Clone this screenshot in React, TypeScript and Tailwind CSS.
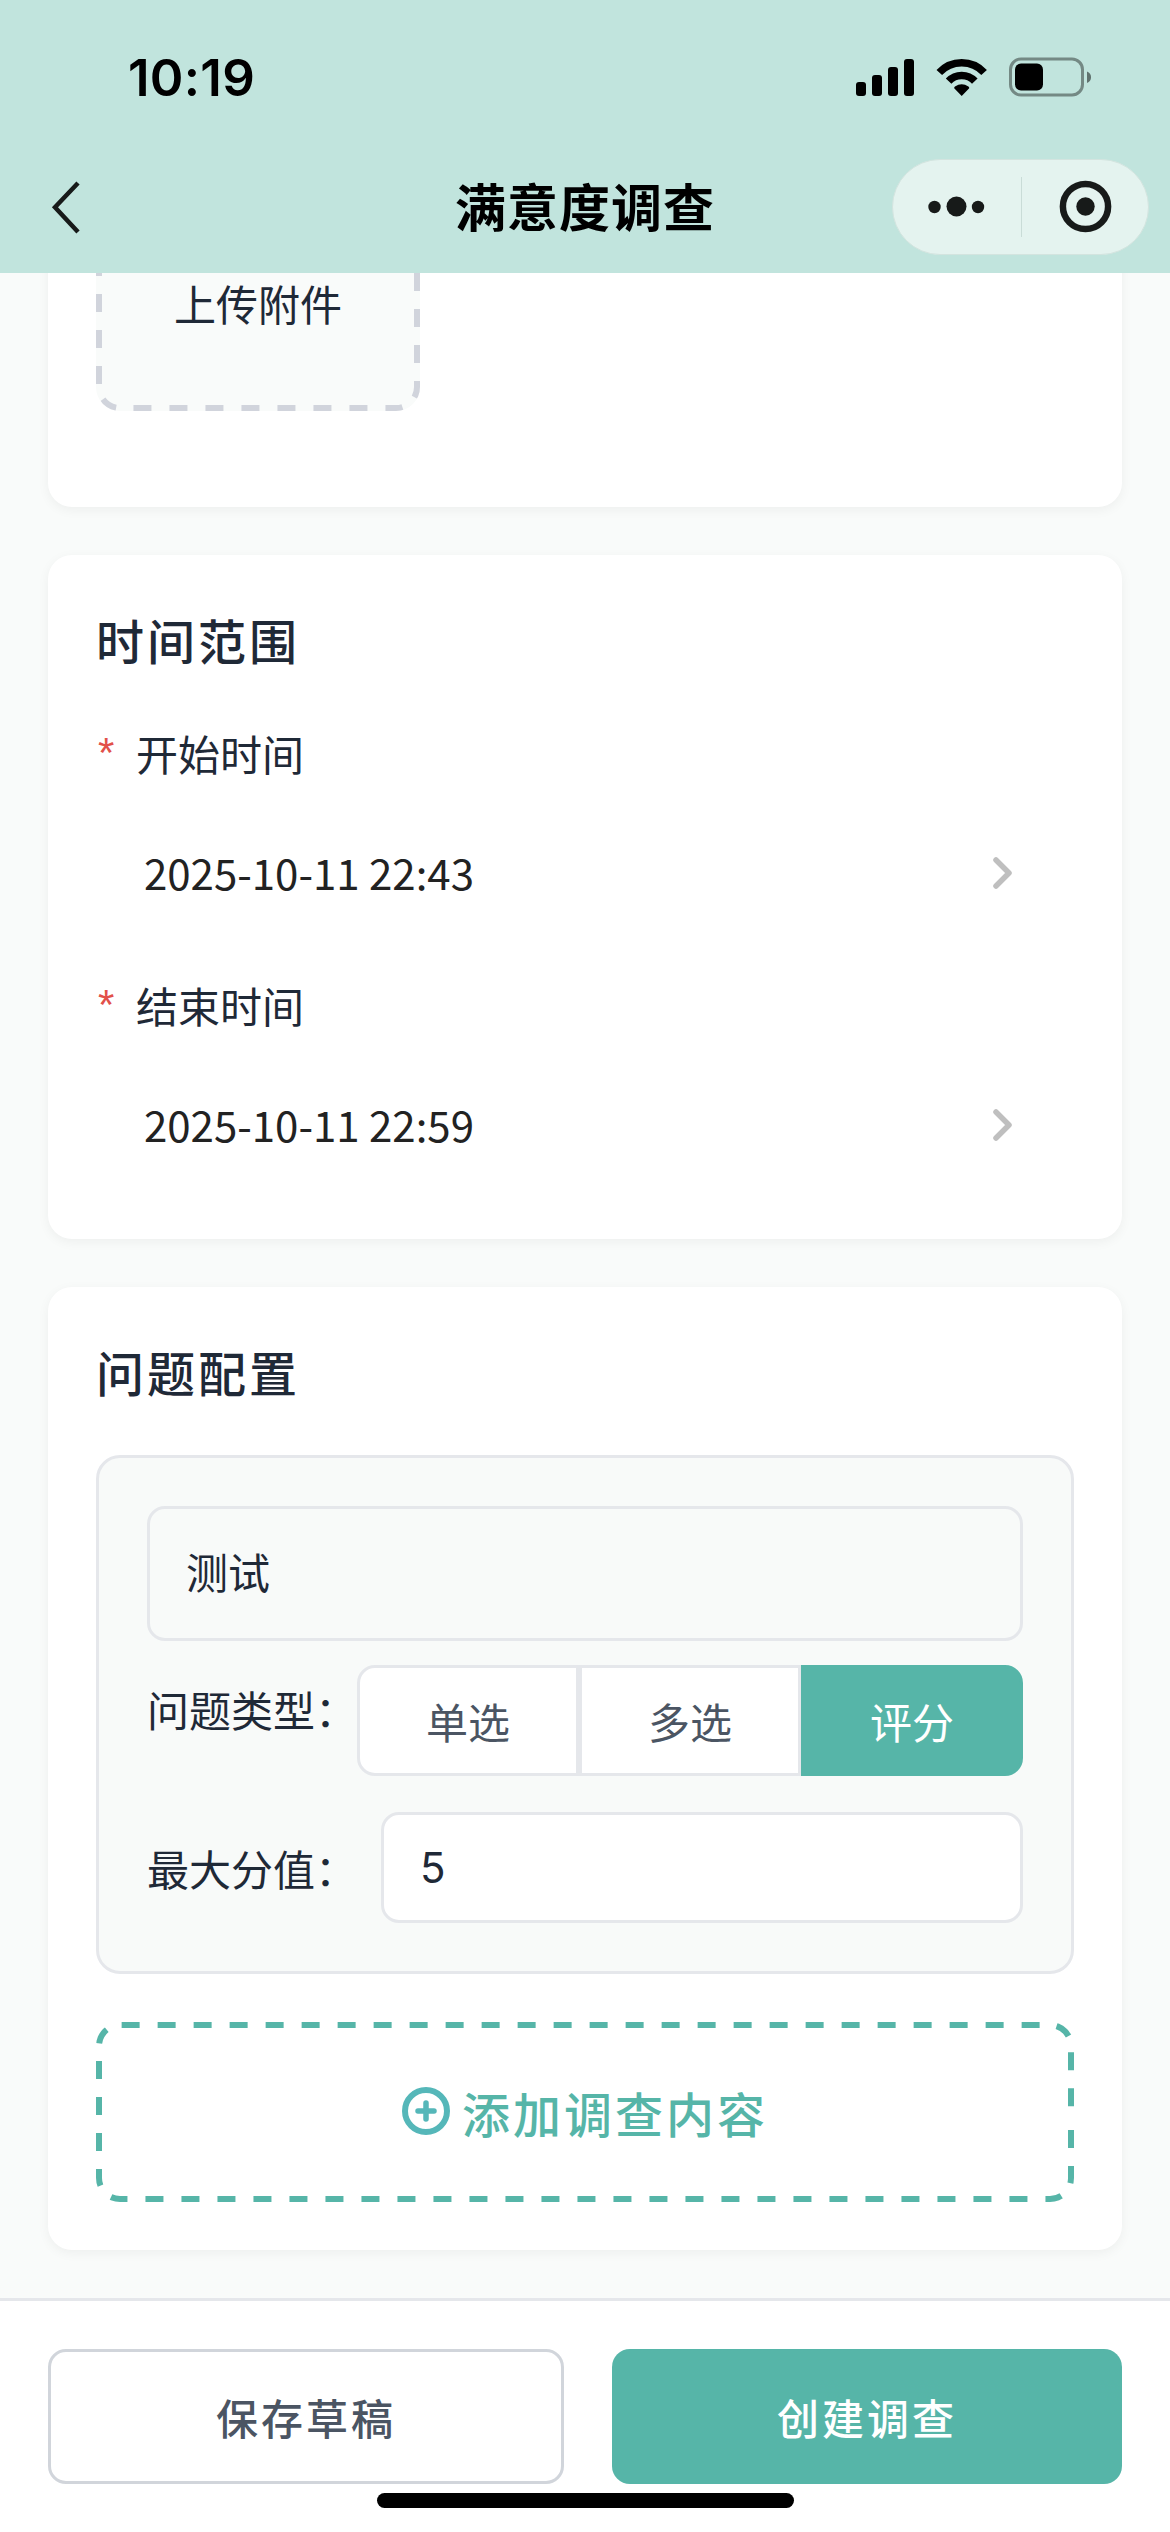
import React, { useState } from 'react';
import clsx from 'clsx';

const QUESTION_TYPES = ['单选', '多选', '评分'];

const StatusBar: React.FC = () => (
  <div className="flex h-[141px] items-start justify-between pl-[128px] pr-[78px] pt-[48px]">
    <span className="font-[Inter] text-[51px] font-semibold leading-[60px] tracking-[0.3px]">10:19</span>
    <div className="flex items-center pt-[9px]">
      <svg width="58" height="40" viewBox="0 0 58 40">
        <rect x="0" y="25" width="10" height="14" rx="3" />
        <rect x="16" y="18" width="10" height="21" rx="3" />
        <rect x="32" y="10" width="10" height="29" rx="3" />
        <rect x="48" y="2" width="10" height="37" rx="3" />
      </svg>
      <svg width="52" height="40" viewBox="0 0 52 40" className="ml-[22px]">
        <path d="M3.3 15.5A30.6 30.6 0 0 1 48.1 15.5" fill="none" stroke="#000" strokeWidth="7.6" />
        <path d="M12.6 24.2A17.9 17.9 0 0 1 38.8 24.2" fill="none" stroke="#000" strokeWidth="7.6" />
        <path d="M25.7 39L18.2 31.2Q18 30 19 29.4Q25.7 25.2 32.4 29.4Q33.4 30 33.2 31.2Z" />
      </svg>
      <svg width="83" height="40" viewBox="0 0 83 40" className="ml-[21px]">
        <rect x="1.5" y="2" width="72" height="36" rx="10.5" fill="none" stroke="#000" strokeOpacity="0.4" strokeWidth="3" />
        <rect x="6" y="6.5" width="28" height="27" rx="6" />
        <path d="M78 14.5Q82 16 82 20.3T78 26Z" fillOpacity="0.5" />
      </svg>
    </div>
  </div>
);

const NavBar: React.FC = () => (
  <div className="relative flex h-[132px] items-center justify-between pl-[48px] pr-[21px]">
    <svg width="36" height="56" viewBox="0 0 36 56" fill="none" stroke="#171a19" strokeWidth="4.5">
      <path d="M30 4L7 28.3L30 53" />
    </svg>
    <h1 className="absolute inset-x-0 pb-[5px] text-center text-[51px] font-bold leading-[72px] tracking-[1px]">满意度调查</h1>
    <div className="relative flex h-[96px] w-[257px] items-center rounded-full border border-[#d3e4df] bg-[#e4f3ef]">
      <svg width="128" height="60" viewBox="0 0 128 60" fill="#171a19">
        <circle cx="41.5" cy="30" r="6.2" />
        <circle cx="63.5" cy="29.5" r="10" />
        <circle cx="85" cy="30" r="6.2" />
      </svg>
      <div className="h-[60px] w-px bg-[#c9dcd7]" />
      <svg width="126" height="60" viewBox="0 0 126 60">
        <circle cx="63.5" cy="29.5" r="22.6" fill="none" stroke="#171a19" strokeWidth="6.5" />
        <circle cx="63.5" cy="29.5" r="9.2" fill="#171a19" />
      </svg>
    </div>
  </div>
);

const Card: React.FC<{ className?: string; children: React.ReactNode }> = ({ className, children }) => (
  <section className={clsx('shrink-0 rounded-[24px] bg-white p-12 shadow-[0_3px_12px_rgba(0,0,0,0.05)]', className)}>
    {children}
  </section>
);

const SectionTitle: React.FC<{ children: React.ReactNode }> = ({ children }) => (
  <h2 className="mb-12 text-[48px] font-medium leading-[72px] tracking-[3px]">{children}</h2>
);

// Long dashes along a rounded outline, starting from the middle of the right side
const DashedOutline: React.FC<{ width: number; height: number; color: string }> = ({ width: w, height: h, color }) => (
  <svg width={w} height={h} viewBox={`0 0 ${w} ${h}`} className="absolute inset-0 rounded-[24px]">
    <path
      d={`M${w} ${h / 2}V${h - 24}A24 24 0 0 1 ${w - 24} ${h}H24A24 24 0 0 1 0 ${h - 24}V24A24 24 0 0 1 24 0H${w - 24}A24 24 0 0 1 ${w} 24Z`}
      fill="none"
      stroke={color}
      strokeWidth="12"
      strokeDasharray="18 18"
      strokeDashoffset="18"
    />
  </svg>
);

const TimeField: React.FC<{ label: string; value: string }> = ({ label, value }) => (
  <div>
    <div className="mb-6 flex h-[60px] items-center">
      <span className="w-[40px] pl-[2px] font-['Liberation_Sans'] text-[42px] leading-[60px] text-[#e2504a]">*</span>
      <span className="text-[42px] leading-[60px]">{label}</span>
    </div>
    <button className="flex h-[132px] w-full items-center justify-between px-12 text-[42px] text-[#222222]">
      <span className="pb-[3px]">{value}</span>
      <svg width="48" height="48" viewBox="0 0 48 48" fill="none" stroke="#bfbfbf" strokeWidth="5.5" strokeLinecap="round" strokeLinejoin="round">
        <path d="M18 11L31 24L18 37" />
      </svg>
    </button>
  </div>
);

const App: React.FC = () => {
  const [type, setType] = useState('评分');

  return (
    <div className="flex h-[2532px] w-[1170px] flex-col overflow-hidden bg-[#f9fbfa] font-['Noto_Sans_CJK_SC',sans-serif] text-[#1f2937]">
      <header className="h-[273px] shrink-0 bg-[#c1e4dd] text-black">
        <StatusBar />
        <NavBar />
      </header>

      <main className="flex min-h-0 flex-1 flex-col justify-end gap-12 overflow-hidden px-12 pb-12">
        <Card className="pb-24">
          <div className="relative flex h-[312px] w-[324px] items-center justify-center rounded-[24px] bg-[#f9fbfa] pt-[96px]">
            <DashedOutline width={324} height={312} color="#d1d4dc" />
            <span className="text-[42px] leading-[48px]">上传附件</span>
          </div>
        </Card>

        <Card>
          <SectionTitle>时间范围</SectionTitle>
          <div className="flex flex-col gap-9">
            <TimeField label="开始时间" value="2025-10-11 22:43" />
            <TimeField label="结束时间" value="2025-10-11 22:59" />
          </div>
        </Card>

        <Card>
          <SectionTitle>问题配置</SectionTitle>
          <div className="rounded-[24px] border-[3px] border-[#e5e7eb] bg-[#f8faf9] p-12 text-[42px]">
            <div className="flex h-[135px] items-center rounded-[18px] border-[3px] border-[#e5e7eb] px-9 pb-[6px]">测试</div>
            <div className="mt-6 flex h-[111px]">
              <span className="w-[210px] whitespace-nowrap pt-[12px] leading-[63px]">问题类型：</span>
              <div className="flex flex-1 text-[#4b5563]">
                {QUESTION_TYPES.map(item => (
                  <button
                    key={item}
                    onClick={() => setType(item)}
                    className={clsx(
                      'flex flex-1 items-center justify-center border-[3px] first:rounded-l-[18px] last:rounded-r-[18px]',
                      item === type ? 'border-[#56b5a8] bg-[#56b5a8] text-white' : 'border-[#e5e7eb] bg-white'
                    )}
                  >
                    {item}
                  </button>
                ))}
              </div>
            </div>
            <div className="mt-9 flex h-[111px] items-center">
              <span className="w-[234px] whitespace-nowrap">最大分值：</span>
              <div className="flex h-full flex-1 items-center rounded-[18px] border-[3px] border-[#e5e7eb] bg-white px-9 font-[Inter]">5</div>
            </div>
          </div>

          <button className="relative mt-12 flex h-[180px] w-full items-center justify-center rounded-[24px] text-[#56b5a8]">
            <DashedOutline width={978} height={180} color="#56b5a8" />
            <svg width="48" height="50" viewBox="0 0 48 50" fill="none" stroke="#55b7b9" strokeLinecap="round" className="mr-[12px]">
              <circle cx="24" cy="24" r="21" strokeWidth="6" />
              <path d="M24 16V32M16 24H32" strokeWidth="5.5" />
            </svg>
            <span className="text-[48px] font-medium leading-[72px] tracking-[3px]">添加调查内容</span>
          </button>
        </Card>
      </main>

      <footer className="relative flex h-[234px] shrink-0 gap-12 border-t-[3px] border-[#e5e7eb] bg-white px-12 pt-12 text-[42px] font-medium tracking-[3px]">
        <button className="h-[135px] w-[516px] rounded-[18px] border-[3px] border-[#d1d5db] text-[#4b5563]">保存草稿</button>
        <button className="h-[135px] w-[510px] rounded-[18px] bg-[#56b5a8] text-white">创建调查</button>
        <div className="absolute bottom-[24px] left-[377px] h-[15px] w-[417px] rounded-full bg-black" />
      </footer>
    </div>
  );
};

export default App;
